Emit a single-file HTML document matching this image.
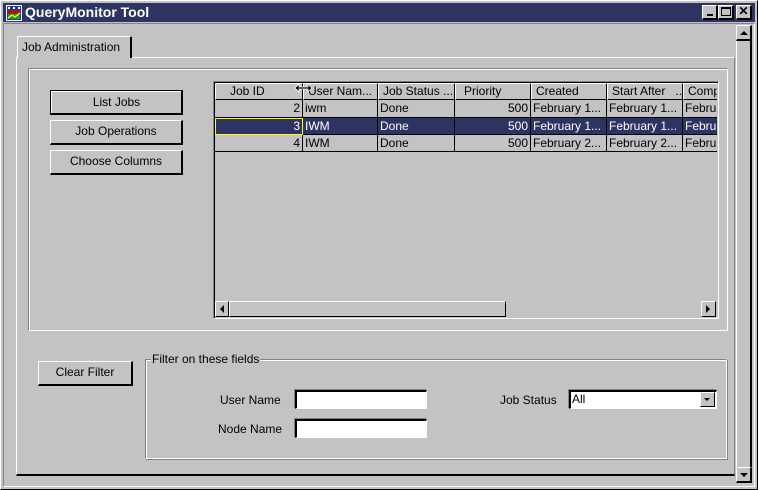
<!DOCTYPE html>
<html><head><style>
*{margin:0;padding:0;box-sizing:border-box}
body{width:758px;height:490px;background:#c4c2c4;font-family:"Liberation Sans",sans-serif;font-size:12px;color:#000;position:relative;overflow:hidden}
.a{position:absolute}
.btn{position:absolute;background:#c4c2c4;border-top:1px solid #fff;border-left:1px solid #fff;border-right:2px solid #000;border-bottom:2px solid #000;text-align:center;line-height:20px}
.t{position:absolute;white-space:nowrap}
.hd{position:absolute;top:83px;height:17px;border-top:1px solid #fff;border-left:1px solid #fff;border-right:1px solid #000;border-bottom:1px solid #000;line-height:15px;padding-left:4px;white-space:nowrap;overflow:hidden}
.cell{position:absolute;height:18px;border-right:1px solid #000;border-bottom:1px solid #000;line-height:17px;padding:0 2px;white-space:nowrap;overflow:hidden}
.inp{position:absolute;background:#fff;border-top:2px solid #000;border-left:2px solid #000;border-right:1px solid #fff;border-bottom:1px solid #fff;box-shadow:-1px -1px 0 #848284}
.sb{position:absolute;background:#c4c2c4;border-top:1px solid #fff;border-left:1px solid #fff;border-right:1px solid #000;border-bottom:1px solid #000}
</style></head><body>
<!-- window frame -->
<div class="a" style="left:0;top:0;width:758px;height:490px;border:1px solid #fff;border-right-color:#000;border-bottom-color:#000"></div>
<!-- title bar -->
<div class="a" style="left:3px;top:3px;width:752px;height:19px;background:#2e3461"></div>
<svg class="a" style="left:6px;top:5px" width="16" height="16" viewBox="0 0 16 16">
<rect x="0" y="0" width="16" height="16" fill="#fff"/><rect x="1" y="1" width="14" height="14" fill="#2233aa"/>
<rect x="2" y="5" width="12" height="4" fill="#a01818"/><rect x="2" y="9" width="12" height="5" fill="#20a020"/>
<path d="M2 13 L6 10 L9 12 L14 8" stroke="#ff0" stroke-width="1.2" fill="none"/>
<rect x="2" y="2" width="2" height="2" fill="#fff"/><rect x="7" y="2" width="2" height="2" fill="#fff"/><rect x="12" y="2" width="2" height="2" fill="#fff"/>
</svg>
<div class="t" style="left:25px;top:3px;color:#fff;font-weight:bold;font-size:14px;line-height:19px">QueryMonitor Tool</div>
<div class="sb" style="left:702px;top:5px;width:16px;height:15px;border-right-width:2px;border-bottom-width:2px"><div class="a" style="left:4px;top:8px;width:6px;height:2px;background:#000"></div></div>
<div class="sb" style="left:718px;top:5px;width:16px;height:15px;border-right-width:2px;border-bottom-width:2px"><div class="a" style="left:2px;top:1px;width:10px;height:9px;border:1px solid #000;border-top-width:2px"></div></div>
<div class="sb" style="left:736px;top:5px;width:16px;height:15px;border-right-width:2px;border-bottom-width:2px;font-weight:bold;font-size:12px;line-height:11px;text-align:center">✕</div>
<!-- content border -->
<div class="a" style="left:3px;top:23px;width:752px;height:464px;border:1px solid #848284;border-right-color:#fff;border-bottom-color:#fff"></div>
<!-- vertical scrollbar -->
<div class="a" style="left:736px;top:25px;width:16px;height:458px;border-left:1px solid #fff;border-right:2px solid #000"></div>
<div class="sb" style="left:736px;top:25px;width:16px;height:16px;border-right-width:2px;border-bottom-width:2px"><svg class="a" style="left:3px;top:4px" width="9" height="6"><path d="M4 1 L8 5 L0 5Z" fill="#000"/></svg></div>
<div class="sb" style="left:736px;top:467px;width:16px;height:16px;border-right-width:2px;border-bottom-width:2px"><svg class="a" style="left:3px;top:4px" width="9" height="6"><path d="M0 1 L8 1 L4 5Z" fill="#000"/></svg></div>
<!-- tab panel -->
<div class="a" style="left:16px;top:57px;width:719px;height:419px;border-top:1px solid #fff;border-left:1px solid #fff;border-right:1px solid #848284;border-bottom:2px solid #000"></div>
<div class="a" style="left:17px;top:36px;width:115px;height:22px;background:#c4c2c4;border-top:1px solid #fff;border-left:1px solid #fff;border-right:2px solid #000;border-radius:2px 2px 0 0"></div>
<div class="t" style="left:22px;top:40px">Job Administration</div>
<!-- inner panel -->
<div class="a" style="left:28px;top:68px;width:700px;height:263px;border:1px solid #848284;border-right-color:#fff;border-bottom-color:#fff;box-shadow:inset 1px 1px 0 #fff"></div>
<div class="btn" style="left:50px;top:90px;width:133px;height:25px;box-shadow:0 0 0 0 #000;outline:1px solid #000;outline-offset:-1px;border:1px solid #000;border-right-width:2px;border-bottom-width:2px"><div class="a" style="left:0;top:0;right:0;bottom:0;border-top:1px solid #fff;border-left:1px solid #fff;line-height:20px">List Jobs</div></div>
<div class="btn" style="left:50px;top:120px;width:133px;height:25px">Job Operations</div>
<div class="btn" style="left:50px;top:150px;width:133px;height:25px">Choose Columns</div>
<!-- table -->
<div class="a" style="left:213px;top:81px;width:506px;height:238px;border:1px solid #848284;border-right-color:#fff;border-bottom-color:#fff;background:#c4c2c4"></div>
<div class="a" style="left:214px;top:82px;width:504px;height:236px;border:1px solid #000;border-right:none;border-bottom:none"></div>
<div class="hd" style="left:215px;width:88px;padding-left:14px">Job ID</div>
<div class="hd" style="left:303px;width:75px">User Nam...</div>
<div class="hd" style="left:378px;width:77px">Job Status ...</div>
<div class="hd" style="left:455px;width:76px;padding-left:8px">Priority</div>
<div class="hd" style="left:531px;width:76px">Created</div>
<div class="hd" style="left:607px;width:76px">Start After &nbsp;&nbsp;...</div>
<div class="hd" style="left:683px;width:34px;border-right:none">Comp</div>
<svg class="a" style="left:294px;top:83px" width="20" height="10"><path d="M1 5 L5 1 L5 4 L14 4 L14 1 L18 5 L14 9 L14 6 L5 6 L5 9Z" fill="#000" stroke="#fff" stroke-width="0.8"/></svg>
<!-- rows -->
<div class="a" style="left:215px;top:118px;width:502px;height:17px;background:#2e3461"></div>
<div class="cell" style="left:215px;top:100px;width:88px;text-align:right">2</div>
<div class="cell" style="left:303px;top:100px;width:75px">iwm</div>
<div class="cell" style="left:378px;top:100px;width:77px">Done</div>
<div class="cell" style="left:455px;top:100px;width:76px;text-align:right">500</div>
<div class="cell" style="left:531px;top:100px;width:76px">February 1...</div>
<div class="cell" style="left:607px;top:100px;width:76px">February 1...</div>
<div class="cell" style="left:683px;top:100px;width:34px;border-right:none">Febru</div>
<div class="cell" style="left:215px;top:118px;width:88px;text-align:right;color:#fff;border:1px solid #ff0;height:17px;line-height:15px">3</div>
<div class="cell" style="left:303px;top:118px;width:75px;color:#fff;height:17px;line-height:16px">IWM</div>
<div class="cell" style="left:378px;top:118px;width:77px;color:#fff;height:17px;line-height:16px">Done</div>
<div class="cell" style="left:455px;top:118px;width:76px;text-align:right;color:#fff;height:17px;line-height:16px">500</div>
<div class="cell" style="left:531px;top:118px;width:76px;color:#fff;height:17px;line-height:16px">February 1...</div>
<div class="cell" style="left:607px;top:118px;width:76px;color:#fff;height:17px;line-height:16px">February 1...</div>
<div class="cell" style="left:683px;top:118px;width:34px;border-right:none;color:#fff;height:17px;line-height:16px">Febru</div>
<div class="cell" style="left:215px;top:135px;width:88px;text-align:right;height:17px;line-height:16px">4</div>
<div class="cell" style="left:303px;top:135px;width:75px;height:17px;line-height:16px">IWM</div>
<div class="cell" style="left:378px;top:135px;width:77px;height:17px;line-height:16px">Done</div>
<div class="cell" style="left:455px;top:135px;width:76px;text-align:right;height:17px;line-height:16px">500</div>
<div class="cell" style="left:531px;top:135px;width:76px;height:17px;line-height:16px">February 2...</div>
<div class="cell" style="left:607px;top:135px;width:76px;height:17px;line-height:16px">February 2...</div>
<div class="cell" style="left:683px;top:135px;width:34px;border-right:none;height:17px;line-height:16px">Febru</div>
<!-- h scrollbar -->
<div class="sb" style="left:215px;top:301px;width:14px;height:16px"><svg class="a" style="left:3px;top:3px" width="6" height="9"><path d="M1 4 L5 0 L5 8Z" fill="#000"/></svg></div>
<div class="sb" style="left:229px;top:301px;width:277px;height:16px"></div>
<div class="sb" style="left:701px;top:301px;width:15px;height:16px"><svg class="a" style="left:4px;top:3px" width="6" height="9"><path d="M4 4 L0 0 L0 8Z" fill="#000"/></svg></div>
<!-- filter area -->
<div class="btn" style="left:38px;top:361px;width:95px;height:25px">Clear Filter</div>
<div class="a" style="left:145px;top:359px;width:582px;height:100px;border:1px solid #848284;border-right-color:#fff;border-bottom-color:#fff;box-shadow:inset 1px 1px 0 #fff,1px 1px 0 #848284"></div>
<div class="t" style="left:151px;top:352px;background:#c4c2c4;padding:0 1px">Filter on these fields</div>
<div class="t" style="left:220px;top:393px">User Name</div>
<div class="inp" style="left:295px;top:390px;width:132px;height:19px"></div>
<div class="t" style="left:218px;top:422px">Node Name</div>
<div class="inp" style="left:295px;top:419px;width:132px;height:19px"></div>
<div class="t" style="left:500px;top:393px">Job Status</div>
<div class="inp" style="left:569px;top:390px;width:148px;height:19px;padding-left:1px;line-height:15px">All</div>
<div class="sb" style="left:700px;top:392px;width:15px;height:15px"><svg class="a" style="left:3px;top:5px" width="8" height="5"><path d="M0 0 L6 0 L3 3Z" fill="#000"/></svg></div>
</body></html>
